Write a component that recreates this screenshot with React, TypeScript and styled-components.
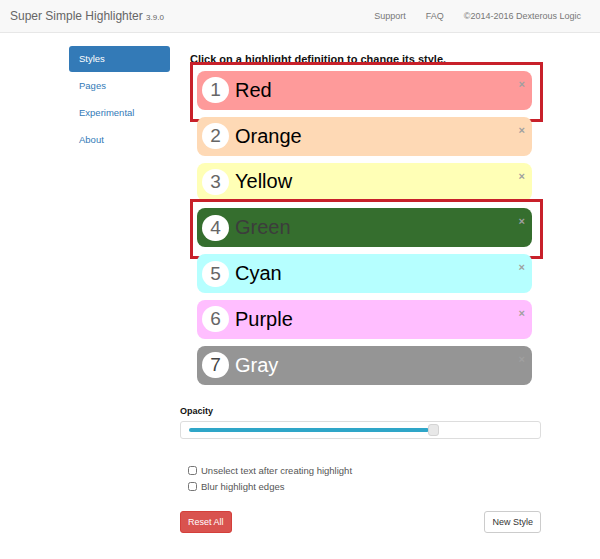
import React, { useState } from "react";
import styled, { createGlobalStyle } from "styled-components";

const GlobalStyle = createGlobalStyle`
  html, body {
    margin: 0;
    padding: 0;
    background: #fff;
    font-family: "Liberation Sans", Arial, sans-serif;
  }
`;

const STYLES = [
  { id: 1, title: "Red", bg: "#fe9a9a", color: "#000", num: "#666", marked: true },
  { id: 2, title: "Orange", bg: "#fed9b5", color: "#000", num: "#666" },
  { id: 3, title: "Yellow", bg: "#ffffb6", color: "#000", num: "#666" },
  { id: 4, title: "Green", bg: "#356e2e", color: "#3c3c3c", num: "#666", marked: true },
  { id: 5, title: "Cyan", bg: "#b6ffff", color: "#000", num: "#666" },
  { id: 6, title: "Purple", bg: "#ffbeff", color: "#000", num: "#666" },
  { id: 7, title: "Gray", bg: "#959595", color: "#fff", num: "#444" },
];

const TABS = ["Styles", "Pages", "Experimental", "About"];

export default function App() {
  const [tab, setTab] = useState(0);
  const opacity = 0.7;

  return (
    <>
      <GlobalStyle />
      <Navbar>
        <Brand>
          Super Simple Highlighter <small>3.9.0</small>
        </Brand>
        <NavLinks>
          <NavLink>Support</NavLink>
          <NavLink>FAQ</NavLink>
          <NavLink>©2014-2016 Dexterous Logic</NavLink>
        </NavLinks>
      </Navbar>

      <Page>
        <SideNav>
          {TABS.map((t, i) => (
            <SideItem key={t} $active={i === tab} onClick={() => setTab(i)}>
              {t}
            </SideItem>
          ))}
        </SideNav>

        <Main>
          <Heading>Click on a highlight definition to change its style.</Heading>
          <HighlightList>
            {STYLES.map((s) => (
              <HighlightRow key={s.id} $bg={s.bg} $fg={s.color} $marked={!!s.marked}>
                <Badge $fg={s.num}>{s.id}</Badge>
                <span>{s.title}</span>
                <Close>×</Close>
              </HighlightRow>
            ))}
          </HighlightList>

          <FieldLabel>Opacity</FieldLabel>
          <Slider>
            <Track style={{ width: `${opacity * 100}%` }} />
            <Thumb />
          </Slider>

          <Checks>
            <Check>
              <input type="checkbox" /> Unselect text after creating highlight
            </Check>
            <Check>
              <input type="checkbox" /> Blur highlight edges
            </Check>
          </Checks>

          <Buttons>
            <Button $kind="danger">Reset All</Button>
            <Button $kind="default">New Style</Button>
          </Buttons>
        </Main>
      </Page>
    </>
  );
}

const Navbar = styled.div`
  display: flex;
  align-items: center;
  justify-content: space-between;
  height: 32px;
  background: #f8f8f8;
  border-bottom: 1px solid #e7e7e7;
  padding: 0 19px 0 10px;
`;

const Brand = styled.div`
  font-size: 12px;
  color: #666;
  small {
    font-size: 8px;
  }
`;

const NavLinks = styled.div`
  display: flex;
  gap: 20px;
`;

const NavLink = styled.a`
  font-size: 9px;
  color: #777;
  cursor: pointer;
`;

const Page = styled.div`
  display: flex;
  padding: 13px 0 0 69px;
  gap: 10px;
`;

const Main = styled.div`
  display: flex;
  flex-direction: column;
  width: 361px;
`;

const Heading = styled.div`
  margin: 6px 0 0 10px;
  font-size: 11px;
  font-weight: bold;
  line-height: 14px;
  color: #111;
`;

const SideNav = styled.ul`
  list-style: none;
  margin: 0;
  padding: 0;
  width: 101px;
  display: flex;
  flex-direction: column;
  gap: 1px;
`;

const SideItem = styled.li<{ $active: boolean }>`
  height: 26px;
  line-height: 26px;
  padding-left: 10px;
  border-radius: 3px;
  font-size: 9.5px;
  cursor: pointer;
  color: ${(p) => (p.$active ? "#fff" : "#337ab7")};
  background: ${(p) => (p.$active ? "#337ab7" : "transparent")};
`;

const HighlightList = styled.div`
  display: flex;
  flex-direction: column;
  gap: 7px;
  margin: 5px 0 0 17px;
  width: 335px;
`;

const HighlightRow = styled.div<{ $bg: string; $fg: string; $marked: boolean }>`
  position: relative;
  display: flex;
  align-items: center;
  gap: 6px;
  height: 38.8px;
  padding-left: 5px;
  box-sizing: border-box;
  border-radius: 8px;
  background: ${(p) => p.$bg};
  color: ${(p) => p.$fg};
  font-size: 20px;
  cursor: pointer;
  &::after {
    content: "";
    display: ${(p) => (p.$marked ? "block" : "none")};
    position: absolute;
    top: -9px;
    left: -7px;
    right: -11px;
    bottom: -12px;
    border: 3.5px solid #c8202a;
    pointer-events: none;
  }
`;

const Badge = styled.span<{ $fg: string }>`
  display: flex;
  align-items: center;
  justify-content: center;
  width: 27px;
  height: 26px;
  border-radius: 13px;
  background: #fff;
  color: ${(p) => p.$fg};
  font-size: 19px;
`;

const Close = styled.span`
  position: absolute;
  top: 7px;
  right: 7px;
  font-size: 11px;
  font-weight: bold;
  color: #a0a0a0;
`;

const FieldLabel = styled.div`
  margin-top: 21px;
  font-size: 9px;
  font-weight: bold;
  color: #111;
`;

const Slider = styled.div`
  margin-top: 5px;
  height: 18px;
  border: 1px solid #ddd;
  border-radius: 3px;
  box-sizing: border-box;
  padding: 0 8px;
  display: flex;
  align-items: center;
`;

const Track = styled.div`
  height: 4px;
  border-radius: 2px;
  background: #2fa6c8;
`;

const Thumb = styled.div`
  flex-shrink: 0;
  margin-left: -1px;
  width: 11px;
  height: 12px;
  box-sizing: border-box;
  border-radius: 3px;
  background: #e8e8e8;
  border: 1px solid #d4d4d4;
`;

const Checks = styled.div`
  display: flex;
  flex-direction: column;
  gap: 5px;
  margin: 26px 0 0 8px;
`;

const Check = styled.label`
  display: flex;
  align-items: center;
  gap: 4px;
  font-size: 9.5px;
  color: #555;
  input {
    margin: 0;
    width: 9px;
    height: 9px;
  }
`;

const Buttons = styled.div`
  display: flex;
  justify-content: space-between;
  margin-top: 19px;
`;

const Button = styled.button<{ $kind: "danger" | "default" }>`
  height: 22px;
  padding: 0 7px;
  border-radius: 3px;
  font-family: "Liberation Sans", Arial, sans-serif;
  font-size: 9px;
  cursor: pointer;
  background: ${(p) => (p.$kind === "danger" ? "#d9534f" : "#fff")};
  color: ${(p) => (p.$kind === "danger" ? "#fff" : "#333")};
  border: 1px solid ${(p) => (p.$kind === "danger" ? "#d43f3a" : "#ccc")};
`;
